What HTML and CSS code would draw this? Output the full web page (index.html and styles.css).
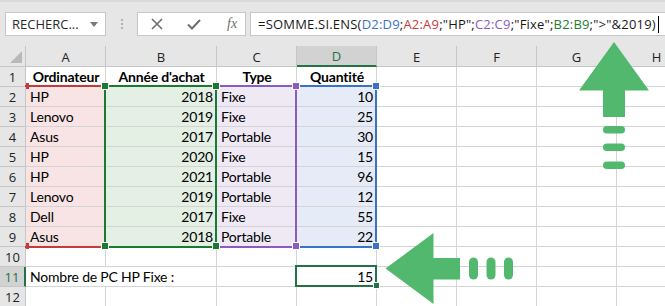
FILE: index.html
```html
<!DOCTYPE html>
<html lang="fr">
<head>
<meta charset="utf-8">
<title>SOMME.SI.ENS</title>
<link rel="stylesheet" href="styles.css">
</head>
<body>
<div class="app">
  <div class="toolbar">
    <div class="namebox">
      <span class="nb-text">RECHERC...</span>
      <svg class="nb-caret" width="8" height="5" viewBox="0 0 8 5"><path d="M0 0H8L4 5Z" fill="#7a7a7a"/></svg>
    </div>
    <div class="grip"><i></i><i></i><i></i></div>
    <div class="fbtns">
      <svg class="btn" width="12" height="12" viewBox="0 0 12 12"><path d="M1 1L11 11M11 1L1 11" stroke="#6f6f6f" stroke-width="1.6" fill="none"/></svg>
      <svg class="btn" width="14" height="12" viewBox="0 0 14 12"><path d="M1 6.5L5 10.5L13 2" stroke="#6f6f6f" stroke-width="2" fill="none"/></svg>
      <span class="fx">fx</span>
    </div>
    <div class="formula">=SOMME.SI.ENS(<span class="c-blue">D2:D9</span>;<span class="c-red">A2:A9</span>;"HP";<span class="c-purple">C2:C9</span>;"Fixe";<span class="c-green">B2:B9</span>;"&gt;"&amp;2019)<span class="cursor"></span></div>
  </div>

  <div class="sheet">
    <div class="grid">
      <div class="corner"><span class="corner-tri"></span></div>
      <div class="ch">A</div><div class="ch">B</div><div class="ch">C</div><div class="ch ch-active">D</div><div class="ch">E</div><div class="ch">F</div><div class="ch">G</div><div class="ch">H</div>

      <div class="rh">1</div>
      <div class="cell head">Ordinateur</div><div class="cell head">Année d'achat</div><div class="cell head">Type</div><div class="cell head">Quantité</div><div class="cell"></div><div class="cell"></div><div class="cell"></div><div class="cell"></div>

      <div class="rh">2</div>
      <div class="cell fa">HP</div><div class="cell fb num">2018</div><div class="cell fc">Fixe</div><div class="cell fd num">10</div><div class="cell"></div><div class="cell"></div><div class="cell"></div><div class="cell"></div>

      <div class="rh">3</div>
      <div class="cell fa">Lenovo</div><div class="cell fb num">2019</div><div class="cell fc">Fixe</div><div class="cell fd num">25</div><div class="cell"></div><div class="cell"></div><div class="cell"></div><div class="cell"></div>

      <div class="rh">4</div>
      <div class="cell fa">Asus</div><div class="cell fb num">2017</div><div class="cell fc">Portable</div><div class="cell fd num">30</div><div class="cell"></div><div class="cell"></div><div class="cell"></div><div class="cell"></div>

      <div class="rh">5</div>
      <div class="cell fa">HP</div><div class="cell fb num">2020</div><div class="cell fc">Fixe</div><div class="cell fd num">15</div><div class="cell"></div><div class="cell"></div><div class="cell"></div><div class="cell"></div>

      <div class="rh">6</div>
      <div class="cell fa">HP</div><div class="cell fb num">2021</div><div class="cell fc">Portable</div><div class="cell fd num">96</div><div class="cell"></div><div class="cell"></div><div class="cell"></div><div class="cell"></div>

      <div class="rh">7</div>
      <div class="cell fa">Lenovo</div><div class="cell fb num">2019</div><div class="cell fc">Portable</div><div class="cell fd num">12</div><div class="cell"></div><div class="cell"></div><div class="cell"></div><div class="cell"></div>

      <div class="rh">8</div>
      <div class="cell fa">Dell</div><div class="cell fb num">2017</div><div class="cell fc">Fixe</div><div class="cell fd num">55</div><div class="cell"></div><div class="cell"></div><div class="cell"></div><div class="cell"></div>

      <div class="rh">9</div>
      <div class="cell fa">Asus</div><div class="cell fb num">2018</div><div class="cell fc">Portable</div><div class="cell fd num">22</div><div class="cell"></div><div class="cell"></div><div class="cell"></div><div class="cell"></div>

      <div class="rh">10</div>
      <div class="cell"></div><div class="cell"></div><div class="cell"></div><div class="cell"></div><div class="cell"></div><div class="cell"></div><div class="cell"></div><div class="cell"></div>

      <div class="rh rh-active">11</div>
      <div class="cell span2">Nombre de PC HP Fixe :</div><div class="cell"></div><div class="cell num">15</div><div class="cell"></div><div class="cell"></div><div class="cell"></div><div class="cell"></div>

      <div class="rh">12</div>
      <div class="cell"></div><div class="cell"></div><div class="cell"></div><div class="cell"></div><div class="cell"></div><div class="cell"></div><div class="cell"></div><div class="cell"></div>
    </div>

    <div class="rng rng-blue"></div>
    <div class="rng rng-purple"></div>
    <div class="rng rng-red"></div>
    <div class="rng rng-green"></div>

    <span class="sq sq-red sq-r1"></span><span class="sq sq-red sq-r2"></span>
    <span class="sq sq-blue sq-b1"></span><span class="sq sq-blue sq-b2"></span>
    <span class="sq sq-purple sq-p1"></span><span class="sq sq-purple sq-p2"></span>
    <span class="sq sq-green sq-g1"></span><span class="sq sq-green sq-g2"></span><span class="sq sq-green sq-g3"></span><span class="sq sq-green sq-g4"></span>

    <div class="active-cell"></div>
    <span class="fill-handle"></span>
  </div>

  <svg class="arrows" width="665" height="306" viewBox="0 0 665 306">
    <g fill="#52b86e">
      <polygon points="614,42 649,90.5 625,90.5 625,117 603,117 603,90.5 579,90.5"/>
      <rect x="603" y="126" width="22" height="7.5" rx="3.75"/>
      <rect x="603" y="143.5" width="22" height="7.5" rx="3.75"/>
      <rect x="603" y="161.5" width="22" height="7.5" rx="3.75"/>
      <polygon points="385.5,268.5 433.5,233 433.5,258 460,258 460,279.5 433.5,279.5 433.5,304"/>
      <rect x="469" y="257.5" width="9" height="22" rx="4.5"/>
      <rect x="486.5" y="257.5" width="9" height="22" rx="4.5"/>
      <rect x="504" y="257.5" width="9" height="22" rx="4.5"/>
    </g>
  </svg>
</div>
</body>
</html>
```

FILE: styles.css
```css
* { box-sizing: border-box; }

body {
  margin: 0;
  width: 665px;
  height: 306px;
  overflow: hidden;
  background: #ffffff;
  font-family: Lato, "Liberation Sans", sans-serif;
}

.app {
  position: relative;
  width: 665px;
  height: 306px;
  overflow: hidden;
}

/* ---------- formula bar ---------- */
.toolbar {
  height: 46px;
  background: #e6e6e6;
  border-top: 2px solid #dadada;
  padding: 10px 0 0 5px;
  display: flex;
  align-items: flex-start;
}

.namebox {
  width: 101px;
  height: 24px;
  background: #fff;
  border: 1px solid #c6c6c6;
  display: flex;
  align-items: center;
  justify-content: space-between;
  padding: 0 7px 0 6px;
  font: 13px "Open Sans", "Liberation Sans", sans-serif;
  color: #2b2b2b;
}

.grip {
  width: 31px;
  height: 24px;
  display: flex;
  flex-direction: column;
  align-items: center;
  justify-content: center;
  gap: 2px;
}
.grip i {
  display: block;
  width: 2px;
  height: 2px;
  background: #b3b3b3;
}

.fbtns {
  width: 109px;
  height: 24px;
  background: #fff;
  border: 1px solid #c6c6c6;
  display: flex;
  align-items: center;
  padding-left: 13px;
  gap: 24px;
}
.fx {
  font: italic 14px "Liberation Serif", serif;
  color: #6f6f6f;
  margin-left: 2px;
}

.formula {
  margin-left: 4px;
  flex: 1;
  height: 24px;
  background: #fff;
  border: 1px solid #c6c6c6;
  border-right: none;
  padding-left: 7px;
  font: 13px "Open Sans", "Liberation Sans", sans-serif;
  letter-spacing: 0.2px;
  line-height: 22px;
  color: #1a1a1a;
  white-space: nowrap;
  overflow: hidden;
}
.c-blue { color: #3b72c9; }
.c-red { color: #c7393a; }
.c-purple { color: #8a5cc1; }
.c-green { color: #1e7d32; }
.cursor {
  display: inline-block;
  width: 1px;
  height: 17px;
  background: #000;
  vertical-align: -4px;
  margin-left: 2px;
}

/* ---------- sheet ---------- */
.sheet {
  position: relative;
}

.grid {
  display: grid;
  grid-template-columns: 26px 80px 111px 80px 80px 80px 80px 80px 80px;
  grid-template-rows: 21px repeat(12, 20px);
}

.corner {
  background: #e6e6e6;
  border-right: 1px solid #c6c6c6;
  border-bottom: 1px solid #c6c6c6;
  position: relative;
}
.corner-tri {
  position: absolute;
  right: 3px;
  bottom: 3px;
  width: 0;
  height: 0;
  border-left: 12px solid transparent;
  border-bottom: 12px solid #b9b9b9;
}

.ch {
  background: #e6e6e6;
  border-right: 1px solid #c6c6c6;
  border-bottom: 1px solid #c6c6c6;
  display: flex;
  align-items: center;
  justify-content: center;
  font: 13px "Open Sans", "Liberation Sans", sans-serif;
  color: #222;
  padding-top: 1px;
}
.ch-active {
  background: #d2d2d2;
  color: #217346;
  border-bottom: 2px solid #217346;
}

.rh {
  background: #e6e6e6;
  border-right: 1px solid #c6c6c6;
  border-bottom: 1px solid #c6c6c6;
  display: flex;
  align-items: center;
  justify-content: center;
  font: 13px "Open Sans", "Liberation Sans", sans-serif;
  color: #222;
}
.rh-active {
  background: #d2d2d2;
  color: #217346;
  border-right: 2px solid #217346;
}

.cell {
  border-right: 1px solid #d4d4d4;
  border-bottom: 1px solid #d4d4d4;
  font-size: 14px;
  letter-spacing: -0.2px;
  color: #000;
  padding: 0 3px 0 4px;
  line-height: 19px;
  white-space: nowrap;
}
.head {
  font-weight: bold;
  text-align: center;
}
.num { text-align: right; }
.span2 { grid-column: span 2; }

.fa { background: #f8e4e4; }
.fb { background: #e3f0e3; }
.fc { background: #eee9f5; }
.fd { background: #e5ecf7; }

/* range highlights drawn over the grid */
.rng {
  position: absolute;
  top: 39px;
  height: 163px;
}
.rng-red {
  left: 25px;
  width: 81px;
  border-top: 2px solid #c43b3b;
  border-bottom: 2px solid #c43b3b;
}
.rng-green {
  left: 104px;
  width: 113px;
  border: 2px solid #1a7a30;
}
.rng-purple {
  left: 215px;
  width: 82px;
  border: 2px solid #8a5cc1;
  border-left: none;
}
.rng-blue {
  left: 295px;
  width: 82px;
  border: 2px solid #3b72c9;
  border-left: none;
}

.sq {
  position: absolute;
  width: 6px;
  height: 6px;
  outline: 1px solid #fff;
}
.sq-red { background: #c43b3b; width: 3px; left: 26px; outline: none; }
.sq-r1 { top: 37px; }
.sq-r2 { top: 197px; }
.sq-green { background: #1a7a30; }
.sq-g1 { left: 102px; top: 37px; }
.sq-g2 { left: 213px; top: 37px; }
.sq-g3 { left: 102px; top: 197px; }
.sq-g4 { left: 213px; top: 197px; }
.sq-purple { background: #8a5cc1; }
.sq-p1 { left: 293px; top: 37px; }
.sq-p2 { left: 293px; top: 197px; }
.sq-blue { background: #3b72c9; }
.sq-b1 { left: 373px; top: 37px; }
.sq-b2 { left: 373px; top: 197px; }

.active-cell {
  position: absolute;
  left: 295px;
  top: 219px;
  width: 82px;
  height: 22px;
  border: 2px solid #217346;
}
.fill-handle {
  position: absolute;
  left: 373px;
  top: 236px;
  width: 7px;
  height: 7px;
  background: #217346;
  border: 1px solid #fff;
}

.arrows {
  position: absolute;
  left: 0;
  top: 0;
  pointer-events: none;
}
```
